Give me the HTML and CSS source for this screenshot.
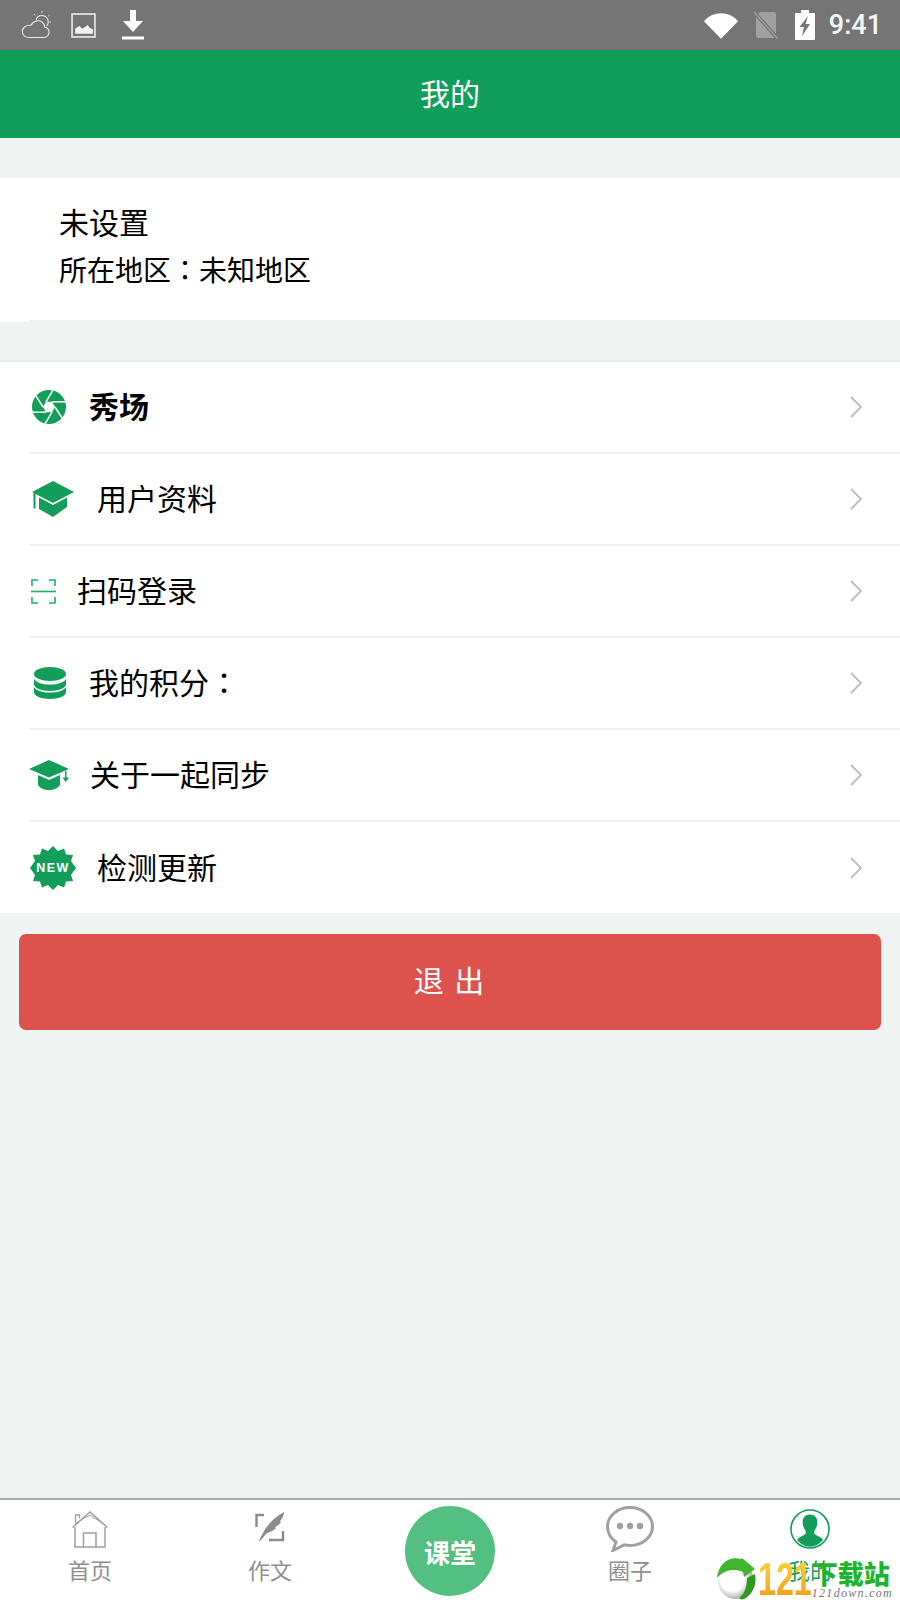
FILE: index.html
```html
<!DOCTYPE html>
<html lang="zh-CN">
<head>
    <meta charset="UTF-8" />
    <title>我的</title>
    <link rel="stylesheet" href="styles.css">
</head>
<body>
    <div class="status-bar">
        <div class="status-left">
            <svg class="st-weather" viewBox="0 0 30 28" fill="none" stroke="#e8e8e8" stroke-width="1.1">
                <path d="M8 26.500h14c3.500 0 6-2.200 6-5.300 0-2.600-1.800-4.600-4.200-5.100C23.200 11.500 19.500 9 15.500 10 12.800 10.600 11 12.200 10 14.300 5 13.800 1.300 16.500 1.300 20.500c0 3.500 2.900 6 6.700 6z"/>
                <path d="M15 9.500c.5-3 3-5 6-5 3.500 0 6.300 2.800 6.300 6.300 0 1.600-.6 3-1.500 4.100"/>
                <path d="M21 0v1.800M28.500 4l-1.300 1.300M13 3l1.200 1.400M30 11h-1.500" stroke-width="1"/>
            </svg>
            <svg class="st-image" viewBox="0 0 24 24">
                <rect x="1" y="1" width="22" height="22" fill="none" stroke="#e6e6e6" stroke-width="1.600"/>
                <path d="M4 20v-5l4-2.500 3 2.500 5-3.500 2 3 3 1v4.500z" fill="#f2f2f2"/>
            </svg>
            <svg class="st-download" viewBox="0 0 24 30">
                <path d="M9 0h6v11h7L12 22 2 11h7z" fill="#fff"/>
                <rect x="1" y="26.500" width="22" height="3" fill="#fff"/>
            </svg>
        </div>
        <div class="status-right">
            <svg class="st-wifi" viewBox="0 0 36 28"><path d="M0 9.500C4.500 4 11 1 18 1s13.500 3 18 8.500L18 28z" fill="#fff"/></svg>
            <svg class="st-sim" viewBox="0 0 24 28">
                <path d="M6 1h14a2 2 0 0 1 2 2v22a2 2 0 0 1-2 2H4a2 2 0 0 1-2-2V5z" fill="#a0a0a0"/>
                <path d="M0 1l24 27" stroke="#757575" stroke-width="3.500"/>
                <path d="M0 1l24 27" stroke="#a0a0a0" stroke-width="1.400"/>
            </svg>
            <svg class="st-battery" viewBox="0 0 20 30">
                <path d="M6 0h8v3h5a1 1 0 0 1 1 1v25a1 1 0 0 1-1 1H1a1 1 0 0 1-1-1V4a1 1 0 0 1 1-1h5z" fill="#fff"/>
                <path d="M13 6L4.500 17h4.500l-2 9 8-12h-4.500z" fill="#757575"/>
            </svg>
            <span class="status-time">9:41</span>
        </div>
    </div>

    <header class="app-bar">我的</header>

    <main class="content">
        <section class="profile">
            <div class="profile-name">未设置</div>
            <div class="profile-area">所在地区<span class="colon" lang="zh-TW">：</span>未知地区</div>
        </section>

        <section class="menu">
            <a class="menu-row">
                <svg class="ic ic-show" viewBox="-17 -17 34 34">
                    <circle r="17" fill="#129e5a"/>
                    <g stroke="#fff" stroke-width="1.500">
                        <path d="M-3 -5.200L4 -17"/>
                        <path d="M3 -5.200L17 -5.200"/>
                        <path d="M6 0L13 11"/>
                        <path d="M3 5.200L-4 17"/>
                        <path d="M-3 5.200L-17 5.200"/>
                        <path d="M-6 0L-13 -11"/>
                    </g>
                    <path d="M-3 -5.200L3 -5.200L6 0L3 5.200L-3 5.200L-6 0z" fill="#fff"/>
                </svg>
                <span class="menu-text menu-text-bold">秀场</span>
                <svg class="chevron" viewBox="0 0 12 22"><path d="M1 1l10 10L1 21" fill="none" stroke="#bdbdbd" stroke-width="1.800"/></svg>
            </a>
            <a class="menu-row">
                <svg class="ic ic-cap" viewBox="0 0 42 36">
                    <path d="M21 0L42 11 21 22 3.500 13v14.500H1.500V11.500L0 11z" fill="#129e5a"/>
                    <path d="M7 16.500L21 24l14-7.500V26L21 36 7 28z" fill="#129e5a"/>
                </svg>
                <span class="menu-text">用户资料</span>
                <svg class="chevron" viewBox="0 0 12 22"><path d="M1 1l10 10L1 21" fill="none" stroke="#bdbdbd" stroke-width="1.800"/></svg>
            </a>
            <a class="menu-row">
                <svg class="ic ic-scan" viewBox="0 0 25 25" fill="none" stroke="#1fae6b" stroke-width="1.600">
                    <path d="M7 1H1v6M18 1h6v6M1 18v6h6M24 18v6h-6"/>
                    <path d="M0 12.500h25"/>
                </svg>
                <span class="menu-text">扫码登录</span>
                <svg class="chevron" viewBox="0 0 12 22"><path d="M1 1l10 10L1 21" fill="none" stroke="#bdbdbd" stroke-width="1.800"/></svg>
            </a>
            <a class="menu-row">
                <svg class="ic ic-coins" viewBox="0 0 32 32" fill="#129e5a">
                    <ellipse cx="16" cy="7" rx="16" ry="7"/>
                    <path d="M0 12c2 3.500 8 5.500 16 5.500S30 15.500 32 12v5c0 4-7 7-16 7S0 21 0 17z"/>
                    <path d="M0 20c2 3.500 8 5.500 16 5.500S30 23.500 32 20v5c0 4-7 7-16 7S0 29 0 25z"/>
                </svg>
                <span class="menu-text">我的积分<span class="colon" lang="zh-TW">：</span></span>
                <svg class="chevron" viewBox="0 0 12 22"><path d="M1 1l10 10L1 21" fill="none" stroke="#bdbdbd" stroke-width="1.800"/></svg>
            </a>
            <a class="menu-row">
                <svg class="ic ic-about" viewBox="0 0 40 30" fill="#129e5a">
                    <path d="M20 0L40 9 20 17.500 0 9z"/>
                    <path d="M9 15l11 5 11-5v10c-2 3-6 5-11 5S11 28 9 25z"/>
                    <path d="M36 11h1.500v7h-1.500z"/>
                    <path d="M33.500 17.500h6.500L36.700 22z"/>
                </svg>
                <span class="menu-text">关于一起同步</span>
                <svg class="chevron" viewBox="0 0 12 22"><path d="M1 1l10 10L1 21" fill="none" stroke="#bdbdbd" stroke-width="1.800"/></svg>
            </a>
            <a class="menu-row">
                <svg class="ic ic-new" viewBox="-23 -22 46 44">
                    <polygon fill="#129e5a" points="0,-22 5,-17 11,-19.500 13,-13.500 20,-13 18,-7 23,0 18,7 20,13 13,13.500 11,19.500 5,17 0,22 -5,17 -11,19.500 -13,13.500 -20,13 -18,7 -23,0 -18,-7 -20,-13 -13,-13.500 -11,-19.500 -5,-17"/>
                    <text class="new-text" y="3.500" text-anchor="middle">NEW</text>
                </svg>
                <span class="menu-text">检测更新</span>
                <svg class="chevron" viewBox="0 0 12 22"><path d="M1 1l10 10L1 21" fill="none" stroke="#bdbdbd" stroke-width="1.800"/></svg>
            </a>
        </section>

        <button class="logout">退 出</button>
    </main>

    <nav class="tab-bar">
        <div class="tab">
            <svg class="tab-icon tab-home" viewBox="0 0 36 37" fill="none" stroke="#a0a0a0" stroke-width="1.500">
                <path d="M0.500 16.500L18 1l17.500 15.500"/>
                <path d="M3 12.500L18 4l15 10" stroke-width="1"/>
                <path d="M3.500 11.500V4h4v3.500" stroke-width="1.300"/>
                <path d="M3 16v20h30V16"/>
                <path d="M11.500 36V22h12.500v14"/>
            </svg>
            <span class="tab-label">首页</span>
        </div>
        <div class="tab">
            <svg class="tab-icon tab-write" viewBox="0 0 30 30" fill="none" stroke="#8c8c8c" stroke-width="2.400">
                <path d="M9 3H1.500v12"/>
                <path d="M28 19v9H14"/>
                <path d="M4 29C8 20 14 8 29 0c0 4-2 7-4 9l1 1c-2 3-4 4-6 5l1 1c-3 3-6 4-9 5-3 3-5 6-7 8z" fill="#8c8c8c" stroke="none"/>
            </svg>
            <span class="tab-label">作文</span>
        </div>
        <div class="tab">
            <div class="tab-center">课堂</div>
        </div>
        <div class="tab">
            <svg class="tab-icon tab-circle" viewBox="0 0 48 46">
                <path d="M24 1.500c12.500 0 22.500 8.500 22.500 19S36.500 39.500 24 39.500c-2 0-4-.2-5.800-.7L7 44.500l3-8.500C4.900 32.500 1.500 27 1.500 20.500 1.500 10 11.500 1.500 24 1.500z" fill="none" stroke="#a0a0a0" stroke-width="3"/>
                <circle cx="14" cy="20" r="3.200" fill="#a0a0a0"/>
                <circle cx="24" cy="20" r="3.200" fill="#a0a0a0"/>
                <circle cx="34" cy="20" r="3.200" fill="#a0a0a0"/>
            </svg>
            <span class="tab-label">圈子</span>
        </div>
        <div class="tab">
            <svg class="tab-icon tab-me" viewBox="0 0 40 40">
                <circle cx="20" cy="20" r="19" fill="#fff" stroke="#129e5a" stroke-width="1.600"/>
                <path d="M20 5.500c-5 0-7.500 3.500-7.300 8 .1 3 1.300 6.300 2.800 8.200.5 1.500.3 3-1 4-2.500 1.500-6 2.500-7.500 5 3 4 8 7 13 7s10-3 13-7c-1.500-2.500-5-3.500-7.500-5-1.300-1-1.500-2.500-1-4 1.500-1.900 2.700-5.200 2.800-8.200.2-4.500-2.300-8-7.300-8z" fill="#129e5a"/>
            </svg>
            <span class="tab-label tab-label-on">我的</span>
        </div>

        <div class="watermark">
            <svg class="wm-icon" viewBox="0 0 40 42">
                <defs>
                    <radialGradient id="wm-ball" cx="0.4" cy="0.45" r="0.65">
                        <stop offset="0.5" stop-color="#fff"/>
                        <stop offset="1" stop-color="#8f8f8a"/>
                    </radialGradient>
                </defs>
                <circle cx="20" cy="23" r="18" fill="url(#wm-ball)"/>
                <path d="M1 20C2 9 9 1 19 0l6 1 1-1 13 11-11 8-1-5C18 10 8 12 1 20z" fill="#3fb62c"/>
                <path d="M31 20l8-4c2 10-2 21-11 25-3 1-5 0-4-2 5-3 7-12 7-19z" fill="#2f9a1f"/>
            </svg>
            <span class="wm-num">121</span>
            <div class="wm-text">
                <span class="wm-cn">下载站</span>
                <span class="wm-url">121down.com</span>
            </div>
        </div>
    </nav>
</body>
</html>
```

FILE: styles.css
```css
* {
    box-sizing: border-box;
    margin: 0;
    padding: 0;
}

body {
    width: 900px;
    height: 1600px;
    display: flex;
    flex-direction: column;
    background: #eff3f2;
    font-family: "Noto Sans CJK SC", "Noto Sans", sans-serif;
    color: #000;
    overflow: hidden;
}

/* status bar */
.status-bar {
    height: 50px;
    background: #757575;
    display: flex;
    justify-content: space-between;
    align-items: center;
    padding: 0 18px 0 21px;
}

.status-left,
.status-right {
    display: flex;
    align-items: center;
}

.st-weather { width: 30px; height: 28px; margin-right: 20px; }
.st-image { width: 25px; height: 25px; margin-right: 25px; }
.st-download { width: 24px; height: 30px; }
.st-wifi { width: 34px; height: 27px; margin-right: 16px; }
.st-sim { width: 24px; height: 28px; margin-right: 17px; }
.st-battery { width: 20px; height: 30px; margin-right: 14px; }

.status-time {
    font-family: Roboto, sans-serif;
    font-weight: 500;
    font-size: 27px;
    color: #f5f5f5;
}

.app-bar {
    height: 88px;
    padding-bottom: 5px;
    background: #109e5a;
    color: #fff;
    font-size: 30px;
    display: flex;
    align-items: center;
    justify-content: center;
}

.content {
    flex: 1;
    padding-top: 40px;
}

/* centred full-width colon, as the SC face sets it low and left */
.colon {
    font-family: "Noto Sans CJK TC", sans-serif;
}

/* profile card */
.profile {
    height: 144px;
    background: #fff;
    padding: 22px 0 0 59px;
    position: relative;
}

.profile-name {
    font-size: 30px;
    line-height: 42px;
}

.profile-area {
    font-size: 28px;
    line-height: 40px;
    margin-top: 7px;
}

.profile::after {
    content: "";
    position: absolute;
    left: 29px;
    right: 0;
    bottom: 0;
    height: 2px;
    background: #eff3f2;
}

/* menu list */
.menu {
    margin-top: 38px;
    background: #fff;
    border-top: 2px solid #e9ecec;
    padding-left: 29px;
}

.menu-row {
    height: 92px;
    display: flex;
    align-items: center;
    border-bottom: 2px solid #f0f0f0;
    padding-right: 38px;
}

.menu-row:last-child {
    border-bottom: none;
    height: 91px;
}

.menu-text {
    font-size: 30px;
    flex: 1;
    margin-bottom: 4px;
}

.menu-text-bold {
    font-weight: 700;
}

.chevron {
    width: 12px;
    height: 22px;
}

.ic { flex: none; }
.ic-show { width: 34px; height: 34px; margin: 0 23px 0 3px; }
.ic-cap { width: 42px; height: 36px; margin: 0 23px 0 3px; }
.ic-scan { width: 25px; height: 25px; margin: 0 21px 0 2px; }
.ic-coins { width: 32px; height: 32px; margin: 0 23px 0 5px; }
.ic-about { width: 40px; height: 30px; margin: 0 21px 0 0; }
.ic-new { width: 46px; height: 44px; margin: 0 21px 0 1px; }

.new-text {
    font-family: "Liberation Sans", sans-serif;
    font-weight: 700;
    font-size: 12.500px;
    letter-spacing: 1.500px;
    fill: #fff;
}

/* logout */
.logout {
    display: block;
    width: 862px;
    height: 96px;
    margin: 21px 19px 0;
    padding-bottom: 6px;
    background: #de524e;
    color: #fff;
    border: none;
    border-radius: 7px;
    font-family: inherit;
    font-size: 30px;
    letter-spacing: 2px;
}

/* bottom tabs */
.tab-bar {
    height: 102px;
    background: #fff;
    border-top: 2px solid #aaa;
    display: flex;
    position: relative;
}

.tab {
    width: 180px;
    display: flex;
    flex-direction: column;
    align-items: center;
    position: relative;
}

.tab-icon { flex: none; }
.tab-home { width: 36px; height: 37px; margin-top: 11px; margin-bottom: 6px; }
.tab-write { width: 30px; height: 30px; margin-top: 12px; margin-bottom: 12px; }
.tab-circle { width: 48px; height: 46px; margin-top: 6px; margin-bottom: 2px; }
.tab-me { width: 40px; height: 40px; margin-top: 9px; margin-bottom: 5px; }

.tab-label {
    font-size: 22px;
    line-height: 30px;
    color: #8f8f8f;
}

.tab-label-on {
    color: #129e5a;
}

.tab-center {
    width: 90px;
    height: 90px;
    margin-top: 6px;
    border-radius: 50%;
    background: #53c082;
    color: #fff;
    font-size: 26px;
    font-weight: 700;
    display: flex;
    align-items: center;
    justify-content: center;
}

/* site watermark over the last tab */
.watermark {
    position: absolute;
    left: 716px;
    top: 58px;
    width: 180px;
    height: 42px;
    display: flex;
    align-items: center;
}

.wm-icon {
    width: 40px;
    height: 42px;
    flex: none;
}

/* squeezed digits: full-size box for the gradient, pulled in on the right */
.wm-num {
    flex: none;
    margin: 0 -23px 0 2px;
    font-family: "Liberation Sans", sans-serif;
    font-weight: 700;
    font-size: 46px;
    line-height: 42px;
    transform: scaleX(0.7);
    transform-origin: left center;
    background: linear-gradient(#fdd835, #f59a1b);
    -webkit-background-clip: text;
    background-clip: text;
    color: transparent;
}

.wm-text {
    display: flex;
    flex-direction: column;
}

.wm-cn {
    font-size: 26px;
    font-weight: 900;
    line-height: 27px;
    color: #1cb52b;
}

.wm-url {
    font-family: "Liberation Serif", serif;
    font-style: italic;
    font-size: 12px;
    line-height: 14px;
    letter-spacing: 1.300px;
    color: #777;
}
```
